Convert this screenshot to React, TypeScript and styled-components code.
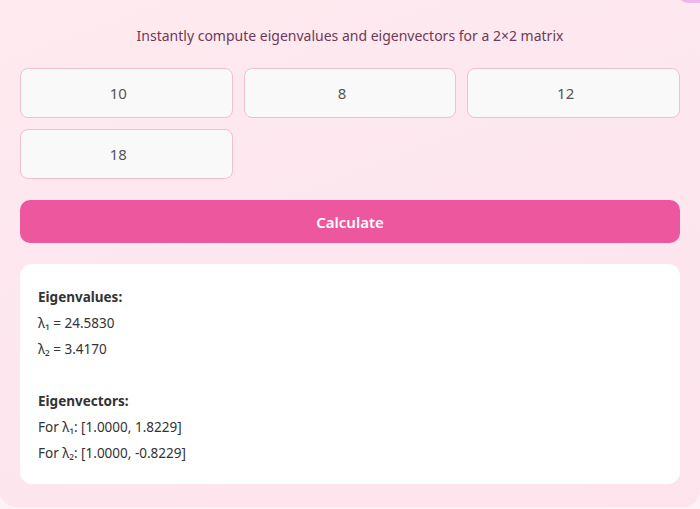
import React, { useState } from 'react';
import styled, { createGlobalStyle } from 'styled-components';

const GlobalStyle = createGlobalStyle`
  html, body {
    margin: 0;
    padding: 0;
    background: #fdf2f6;
    font-family: "Noto Sans", "Open Sans", "DejaVu Sans", sans-serif;
    overflow: hidden;
  }
`;

const initial = ['10', '8', '12', '18'];

export default function App() {
  const [values, setValues] = useState<string[]>(initial);

  const update = (i: number, v: string) => {
    setValues((prev) => prev.map((p, idx) => (idx === i ? v : p)));
  };

  return (
    <>
      <GlobalStyle />
      <Card>
        <Blob />
        <Subtitle>Instantly compute eigenvalues and eigenvectors for a 2×2 matrix</Subtitle>
        <InputGrid>
          {values.map((v, i) => (
            <CellInput key={i} value={v} onChange={(e) => update(i, e.target.value)} />
          ))}
        </InputGrid>
        <CalcButton type="button">Calculate</CalcButton>
        <Result>
          <Heading>Eigenvalues:</Heading>
          <Line>λ₁ = 24.5830</Line>
          <Line>λ₂ = 3.4170</Line>
          <Spacer />
          <Heading>Eigenvectors:</Heading>
          <Line>For λ₁: [1.0000, 1.8229]</Line>
          <Line>For λ₂: [1.0000, -0.8229]</Line>
        </Result>
      </Card>
    </>
  );
}

const Card = styled.div`
  position: relative;
  width: 700px;
  height: 507px;
  box-sizing: border-box;
  padding: 25px 20px 24px;
  background: linear-gradient(160deg, #ffeaf0 0%, #fde6ee 60%, #fde3ec 100%);
  border-radius: 0 0 16px 16px;
  display: flex;
  flex-direction: column;
`;

const Blob = styled.div`
  position: absolute;
  top: -16px;
  right: -4px;
  width: 26px;
  height: 19px;
  border-radius: 0 0 6px 10px;
  background: #ecb6ec;
`;

const Subtitle = styled.p`
  margin: 0 0 21px;
  text-align: center;
  font-size: 14px;
  line-height: 22px;
  color: #6e3a55;
`;

const InputGrid = styled.div`
  display: grid;
  grid-template-columns: repeat(3, 1fr);
  gap: 11px;
`;

const CellInput = styled.input`
  box-sizing: border-box;
  height: 50px;
  width: 100%;
  padding: 0 16px 0 0;
  border: 1px solid #f0bfd2;
  border-radius: 8px;
  background: #faf9f9;
  text-align: center;
  font-family: inherit;
  font-size: 15px;
  color: #555;
  outline: none;
`;

const CalcButton = styled.button`
  margin-top: 21px;
  height: 43px;
  flex-shrink: 0;
  border: none;
  border-radius: 10px;
  background: #ec579d;
  color: #fff;
  font-family: inherit;
  font-size: 15px;
  font-weight: 600;
  cursor: pointer;
`;

const Result = styled.div`
  margin-top: 21px;
  background: #fff;
  border-radius: 12px;
  padding: 20px 18px 18px;
  display: flex;
  flex-direction: column;
  color: #333;
  font-size: 13.5px;
`;

const Heading = styled.div`
  font-weight: 700;
  line-height: 26px;
  color: #333;
`;

const Line = styled.div`
  line-height: 26px;
`;

const Spacer = styled.div`
  height: 26px;
`;
